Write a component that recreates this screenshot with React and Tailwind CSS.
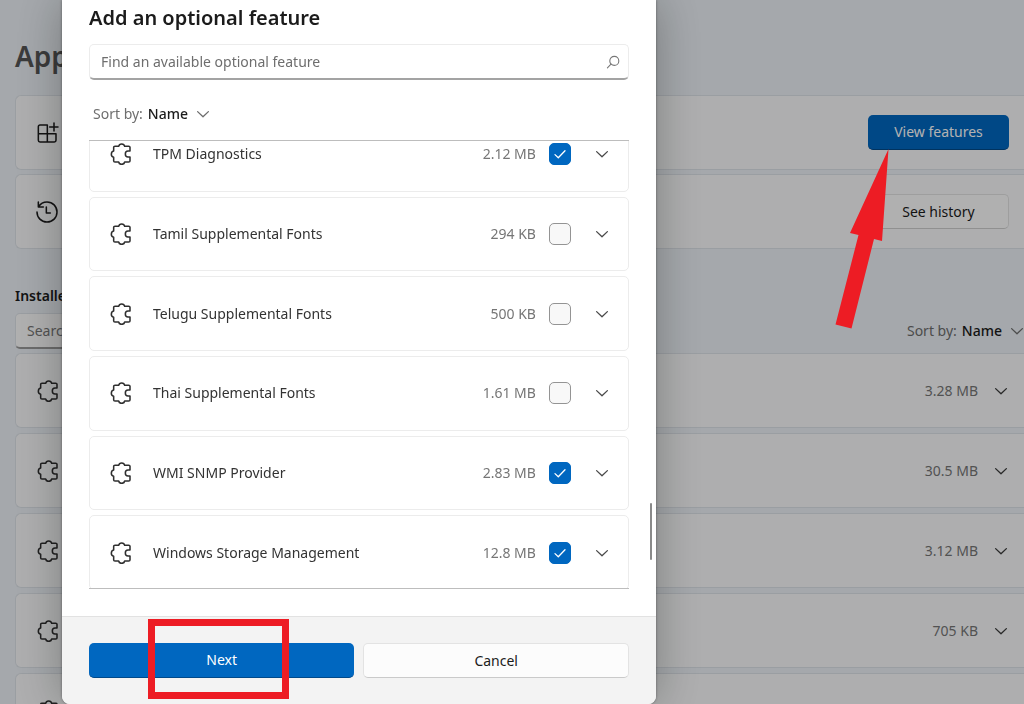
import clsx from "clsx";

const features = [
  { id: "tpm", name: "TPM Diagnostics", size: "2.12 MB", checked: true },
  { id: "tamil", name: "Tamil Supplemental Fonts", size: "294 KB", checked: false },
  { id: "telugu", name: "Telugu Supplemental Fonts", size: "500 KB", checked: false },
  { id: "thai", name: "Thai Supplemental Fonts", size: "1.61 MB", checked: false },
  { id: "wmi", name: "WMI SNMP Provider", size: "2.83 MB", checked: true },
  { id: "storage", name: "Windows Storage Management", size: "12.8 MB", checked: true },
];

// the last one has no size yet
const installedSizes = ["3.28 MB", "30.5 MB", "3.12 MB", "705 KB", ""];

const Chevron = ({ className }) => (
  <svg
    className={clsx("h-2 w-3.5 shrink-0", className)}
    viewBox="0 0 14 8"
    fill="none"
    stroke="currentColor"
    strokeWidth="1.3"
    strokeLinecap="round"
    strokeLinejoin="round"
  >
    <path d="M1.6 1.6 7 6.8l5.4-5.2" />
  </svg>
);

const PuzzleIcon = () => (
  <svg
    className="h-[22px] w-[22px] shrink-0 text-[#2f2f2f]"
    viewBox="0 0 66 66"
    fill="none"
    stroke="currentColor"
    strokeWidth="4.6"
    strokeLinejoin="round"
    strokeLinecap="round"
  >
    <path d="M15 10h11c1-5 4-7 9-7s8 2 9 7h12c2 0 4 1 4 3v11h-6c-5 0-8 4-8 9s3 9 8 9h6v12c0 2-2 3-4 3H44c-1 5-4 7-9 7s-8-2-9-7H15c-2 0-4-1-4-3V43c-5-1-7-4-7-9s2-9 7-10V13c0-2 2-3 4-3Z" />
  </svg>
);

const AddAppIcon = () => (
  <svg
    className="h-[22px] w-[22px] shrink-0 text-[#1b1b1b]"
    viewBox="0 0 66 66"
    fill="none"
    stroke="currentColor"
    strokeWidth="4.6"
    strokeLinejoin="round"
    strokeLinecap="round"
  >
    <path d="M31 9H9c-3 0-5 2-5 5v41c0 3 2 5 5 5h43c3 0 5-2 5-5V35H4M31 9v51M51 3v24M38 15h25" />
  </svg>
);

const HistoryIcon = () => (
  <svg
    className="h-[22px] w-[22px] shrink-0 text-[#1b1b1b]"
    viewBox="0 0 66 66"
    fill="none"
    stroke="currentColor"
    strokeWidth="4.6"
    strokeLinejoin="round"
    strokeLinecap="round"
  >
    <path d="M7 3v15h15M8 17C14 7 23 3 33 3c17 0 30 13 30 30S50 63 33 63 3 50 3 33M31 18v18h12" />
  </svg>
);

const SortBy = ({ id, className }) => (
  <button
    type="button"
    id={id}
    className={clsx("flex items-center text-sm leading-7 text-[#6e6e6e]", className)}
  >
    Sort by:
    <span className="ml-[5px] mr-2 font-medium text-[#1b1b1b]">Name</span>
    <Chevron />
  </button>
);

function FeatureRow({ feature }) {
  return (
    <li className="flex items-center rounded-[5px] border border-[#ececec] bg-white pl-5 pr-[19px]">
      <PuzzleIcon />
      <label htmlFor={feature.id} className="ml-[21px] flex-1 text-sm text-[#333]">
        {feature.name}
      </label>
      <span className="mr-[13px] text-sm text-[#767676]">{feature.size}</span>
      <span className="grid">
        <input
          id={feature.id}
          type="checkbox"
          defaultChecked={feature.checked}
          className="peer col-start-1 row-start-1 h-[22px] w-[22px] appearance-none rounded-[5px] border border-[#949494] bg-[#f8f8f8] checked:border-[#0067c0] checked:bg-[#0067c0]"
        />
        <svg
          className="pointer-events-none invisible col-start-1 row-start-1 h-3 w-3 place-self-center peer-checked:visible"
          viewBox="0 0 12 12"
          fill="none"
          stroke="white"
          strokeWidth="1.3"
          strokeLinecap="round"
          strokeLinejoin="round"
        >
          <path d="M1 6.6 4.3 9.8 11 2.8" />
        </svg>
      </span>
      <button type="button" aria-label={`Expand ${feature.name}`} className="ml-6 text-[#4a4a4a]">
        <Chevron />
      </button>
    </li>
  );
}

// settings page that sits behind the dialog
function SettingsPage() {
  return (
    <main className="h-screen overflow-hidden bg-[#ecf1f6] pl-[15px] pt-9">
      <h1 className="text-[28px] font-semibold leading-10 text-[#555]">Apps</h1>

      <div className="mt-[19px] flex flex-col gap-1">
        <div className="flex h-[75px] items-center justify-between rounded-l-md border border-r-0 border-[#dde2e8] bg-[#f9fafb] pl-[21px] pr-[15px]">
          <AddAppIcon />
          <button
            type="button"
            className="h-[35px] w-[141px] rounded-[5px] border-b border-[#00498a] bg-[#0067c0] text-sm text-white"
          >
            View features
          </button>
        </div>
        <div className="flex h-[75px] items-center justify-between rounded-l-md border border-r-0 border-[#dde2e8] bg-[#f9fafb] pl-5 pr-[15px]">
          <HistoryIcon />
          <button
            type="button"
            className="h-[35px] w-[141px] rounded-[5px] border border-[#e3e3e3] border-b-[#cfcfcf] bg-[#fdfdfd] text-sm text-[#1b1b1b]"
          >
            See history
          </button>
        </div>
      </div>

      <h2 className="mt-[35px] text-sm font-semibold leading-6 text-[#1b1b1b]">
        Installed features
      </h2>
      <div className="mt-[5px] flex items-center justify-between">
        <input
          type="search"
          aria-label="Search installed features"
          placeholder="Search installed features"
          className="h-9 w-72 rounded-[5px] border border-[#dde2e8] border-b-2 border-b-[#9a9a9a] bg-[#fcfcfc] px-[11px] text-sm placeholder:text-[#777]"
        />
        <SortBy id="sort-installed" />
      </div>

      <ul className="mt-1 flex flex-col gap-[5px]">
        {installedSizes.map((size) => (
          <li
            key={size}
            className="flex h-[75px] shrink-0 items-center rounded-l-md border border-r-0 border-[#dde2e8] bg-[#f9fafb] pl-[21px] pr-4"
          >
            <PuzzleIcon />
            <span className="ml-auto text-sm text-[#767676]">{size}</span>
            <button type="button" aria-label="Expand" className="ml-4 text-[#3a3a3a]">
              <Chevron />
            </button>
          </li>
        ))}
      </ul>
    </main>
  );
}

function AddFeatureDialog() {
  return (
    <section
      role="dialog"
      aria-labelledby="dialog-title"
      className="relative ml-[62px] flex h-full w-[58%] flex-col overflow-hidden rounded-b-lg bg-white shadow-[0_0_48px_rgba(0,0,0,0.3),0_0_3px_rgba(0,0,0,0.4)]"
    >
      <div className="flex min-h-0 flex-1 flex-col px-[27px] pt-1">
        <h2 id="dialog-title" className="text-xl font-semibold leading-7 text-[#1b1b1b]">
          Add an optional feature
        </h2>

        <div className="mt-3 flex h-9 shrink-0 items-center rounded-[5px] border border-[#ececec] border-b-2 border-b-[#a3a3a3] pl-[11px] pr-2">
          <input
            type="text"
            aria-label="Find an available optional feature"
            placeholder="Find an available optional feature"
            className="min-w-0 flex-1 text-sm outline-none placeholder:text-[#6e6e6e]"
          />
          <svg
            className="h-3.5 w-3.5 text-[#777]"
            viewBox="0 0 14 14"
            fill="none"
            stroke="currentColor"
            strokeWidth="1.1"
            strokeLinecap="round"
          >
            <circle cx="8.3" cy="5.9" r="4.5" />
            <path d="M5 9.2 1.4 12.8" />
          </svg>
        </div>

        <SortBy id="sort-available" className="mt-5 self-start pl-1" />

        <div className="mb-[27px] mt-3 flex min-h-0 flex-1 flex-col overflow-hidden border-y border-[#bdbdbd]">
          <ul className="-mb-0.5 -mt-6 grid flex-1 auto-rows-fr gap-[5px]">
            {features.map((feature) => (
              <FeatureRow key={feature.id} feature={feature} />
            ))}
          </ul>
        </div>
      </div>

      {/* scrollbar thumb */}
      <div className="absolute bottom-36 right-1 h-[57px] w-0.5 rounded-full bg-[#8a8a8a]" />

      <footer className="grid grid-cols-2 gap-[9px] border-t border-[#e2e2e2] bg-[#f3f3f3] px-[27px] py-[26px]">
        <div className="relative">
          <button
            type="button"
            className="h-[35px] w-full rounded-[5px] border-b border-[#00498a] bg-[#0067c0] text-sm text-white"
          >
            Next
          </button>
          <div className="pointer-events-none absolute -bottom-[21px] -top-6 left-[59px] w-[141px] border-[7px] border-[#ed1c24]" />
        </div>
        <button
          type="button"
          className="h-[35px] rounded-[5px] border border-[#e3e3e3] border-b-[#cacaca] bg-[#fcfcfc] text-sm text-[#1b1b1b]"
        >
          Cancel
        </button>
      </footer>
    </section>
  );
}

export default function App() {
  return (
    <div className="relative font-['Noto_Sans','Open_Sans',sans-serif]">
      <SettingsPage />
      <div className="fixed inset-0 bg-black/30">
        <AddFeatureDialog />
      </div>
      <svg
        className="pointer-events-none absolute right-[134px] top-[149px] h-[180px] w-[56px]"
        viewBox="0 0 56 180"
        fill="#ed1c24"
      >
        <path d="M54.5 0 16 84l8.5 2L1.5 175.5l16 4L40 90l8 2Z" />
      </svg>
    </div>
  );
}
